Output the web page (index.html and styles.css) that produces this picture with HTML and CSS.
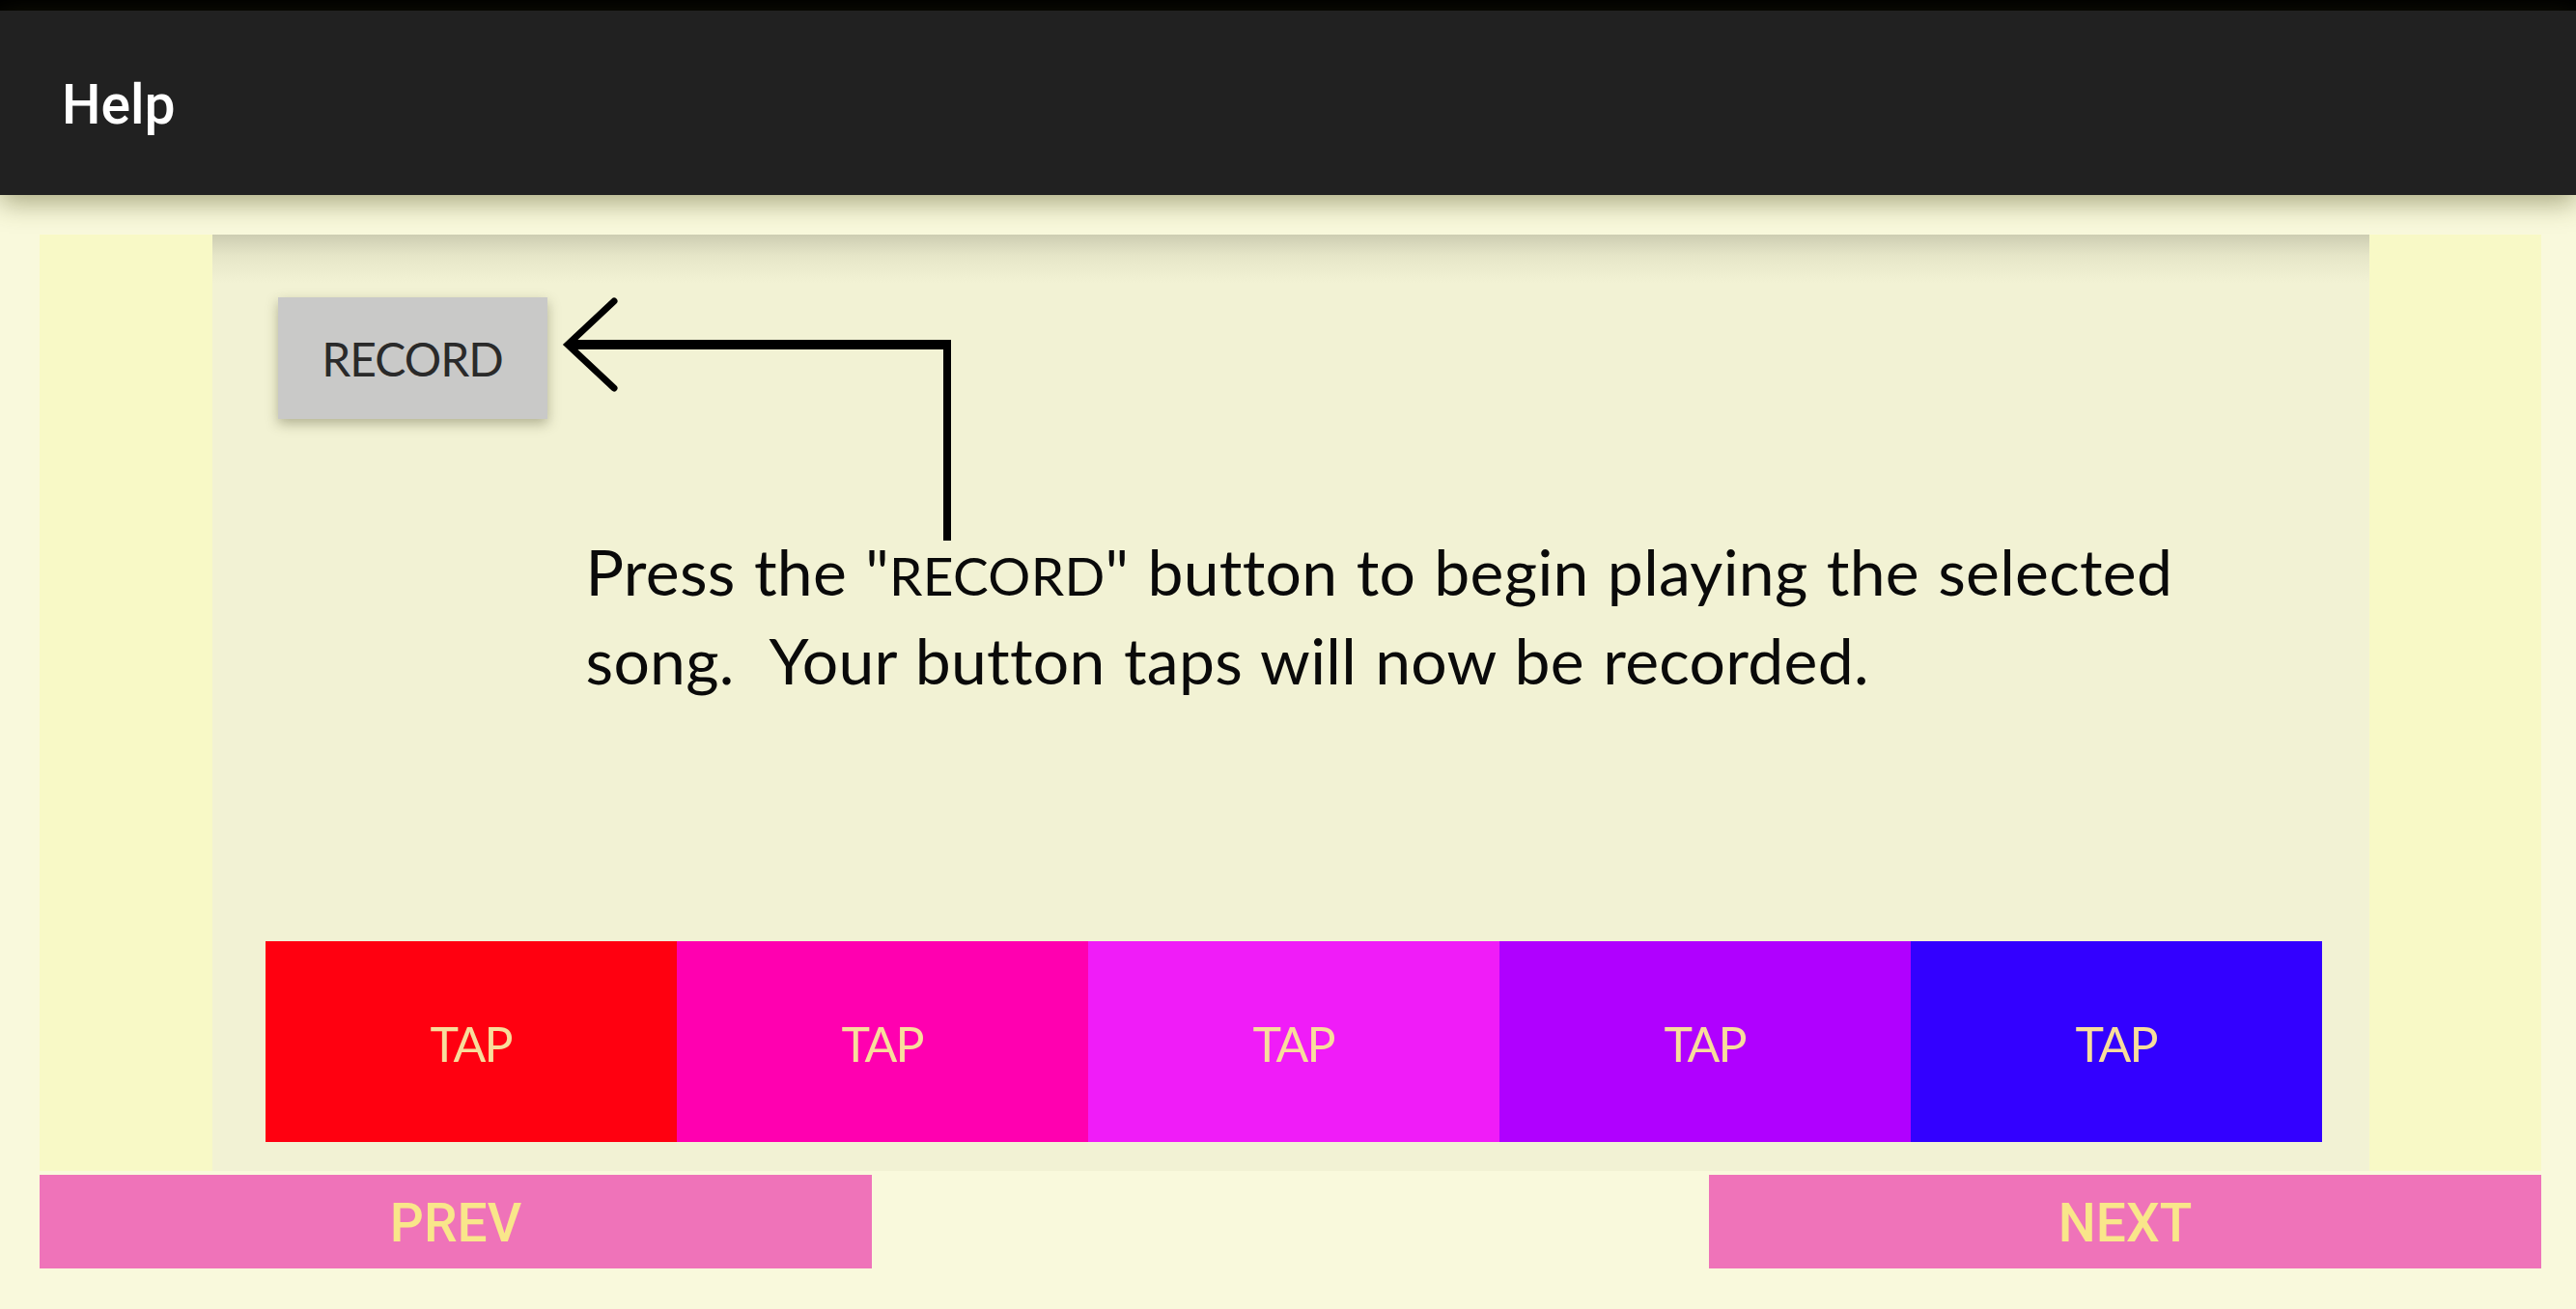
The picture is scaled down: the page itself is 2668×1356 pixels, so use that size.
FILE: index.html
```html
<!DOCTYPE html>
<html lang="en">
  <head>
    <meta charset="UTF-8" />
    <meta name="viewport" content="width=device-width, initial-scale=1.0" />
    <title>Help</title>
    <link rel="stylesheet" href="styles.css">
  </head>
  <body>
    <div class="statusbar"></div>
    <div class="toolbar">
      <h1>Help</h1>
    </div>

    <div class="content">
      <div class="panel">
        <div class="slide">
          <div class="slide-top">
            <div class="record-btn">RECORD</div>
            <svg class="arrow" width="412" height="252" viewBox="0 0 412 252">
              <polyline points="60,4 12,49 60,94" fill="none" stroke="#000" stroke-width="7" stroke-linecap="round" stroke-linejoin="miter" />
              <line x1="12" y1="49" x2="409" y2="49" stroke="#000" stroke-width="10" />
              <line x1="405" y1="44" x2="405" y2="252" stroke="#000" stroke-width="8" />
            </svg>
          </div>
          <p class="slide-text">
            Press the "<span class="caps">RECORD</span>" button to begin playing the selected<br />
            song.&nbsp; Your button taps will now be recorded.
          </p>
          <div class="taps">
            <div class="tap tap-red">TAP</div>
            <div class="tap tap-pink">TAP</div>
            <div class="tap tap-magenta">TAP</div>
            <div class="tap tap-purple">TAP</div>
            <div class="tap tap-blue">TAP</div>
          </div>
        </div>
      </div>

      <div class="nav">
        <button class="nav-btn">PREV</button>
        <button class="nav-btn">NEXT</button>
      </div>
    </div>
  </body>
</html>
```

FILE: styles.css
```css
* {
  margin: 0;
  padding: 0;
  box-sizing: border-box;
}
body {
  background-color: #f9f9dc;
  font-family: "Roboto", "Liberation Sans", sans-serif;
  width: 2668px;
  height: 1356px;
  overflow: hidden;
}
.statusbar {
  height: 11px;
  background-color: #000;
}
.toolbar {
  position: relative;
  z-index: 1;
  height: 191px;
  background-color: #212121;
  display: flex;
  align-items: center;
  padding-left: 64px;
  box-shadow: 0 8px 26px rgba(70, 70, 20, 0.45);
}
.toolbar h1 {
  color: #fff;
  font-size: 57px;
  font-weight: 500;
  margin-top: 4px;
}
.content {
  padding: 41px 36px 0 41px;
}
.panel {
  height: 970px;
  background-color: #f8f9c6;
  display: flex;
  justify-content: center;
}
.slide {
  width: 2234px;
  background: linear-gradient(#cdcdb2, #e6e6c8 22px, #f2f2d4 50px);
  display: flex;
  flex-direction: column;
  padding: 65px 49px 30px 55px;
  font-family: "Lato", "Open Sans", sans-serif;
}
.slide-top {
  display: flex;
  align-items: flex-start;
  height: 252px;
  padding-left: 13px;
}
.record-btn {
  width: 279px;
  height: 126px;
  background-color: #c9c9c8;
  box-shadow: 0 5px 12px rgba(60, 60, 30, 0.35);
  color: #2a2a2a;
  font-size: 48px;
  letter-spacing: -1px;
  display: flex;
  align-items: center;
  justify-content: center;
}
.arrow {
  margin-left: 9px;
}
.slide-text {
  margin-top: -12px;
  margin-left: 332px;
  font-size: 66px;
  line-height: 88px;
  letter-spacing: 0.3px;
  word-spacing: 2px;
  color: #0a0a0a;
}
.slide-text .caps {
  font-size: 55px;
}
.taps {
  margin-top: auto;
  height: 208px;
  display: grid;
  grid-template-columns: repeat(5, 1fr);
}
.tap {
  display: flex;
  align-items: center;
  justify-content: center;
  color: #f8dd9c;
  font-size: 50px;
  letter-spacing: -2px;
  padding-top: 4px;
}
.tap-red {
  background-color: #ff0010;
}
.tap-pink {
  background-color: #ff00b0;
}
.tap-magenta {
  background-color: #f01cf8;
}
.tap-purple {
  background-color: #b000ff;
}
.tap-blue {
  background-color: #3300ff;
}
.nav {
  margin-top: 4px;
  display: flex;
  justify-content: space-between;
}
.nav-btn {
  width: 862px;
  height: 97px;
  border: none;
  background-color: #ef73b9;
  color: #f9e68a;
  font-family: "Roboto", sans-serif;
  font-size: 55px;
  font-weight: 500;
  padding-top: 2px;
}
```
